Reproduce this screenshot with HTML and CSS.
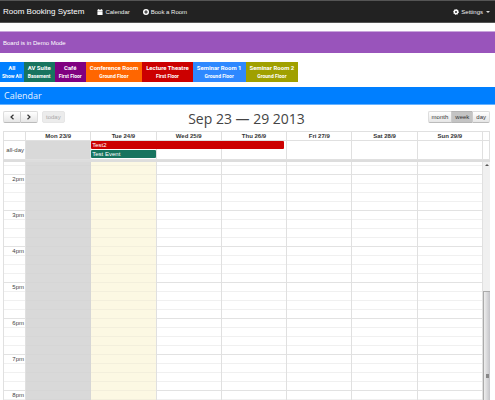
FILE: index.html
```html
<!DOCTYPE html>
<html lang="en">

<head>
    <meta charset="UTF-8">
    <meta name="viewport" content="width=device-width, initial-scale=1.0">
    <title>Room Booking System</title>
    <link rel="stylesheet" href="styles.css">
</head>

<body>
    <!-- navbar -->
    <nav class="navbar">
        <a class="brand" href="#">Room Booking System</a>
        <a class="nav-link nav-calendar" href="#">
            <svg class="icon" viewBox="0 0 14 14"><path fill="currentColor" d="M1 2h2V0h2v2h4V0h2v2h2v3H1zM1 6h12v8H1z"/></svg>
            Calendar
        </a>
        <a class="nav-link nav-book" href="#">
            <svg class="icon" viewBox="0 0 14 14"><circle cx="7" cy="7" r="7" fill="currentColor"/><path stroke="#222" stroke-width="2.4" d="M7 3v8M3 7h8"/></svg>
            Book a Room
        </a>
        <a class="nav-link nav-settings" href="#">
            <svg class="icon" viewBox="0 0 14 14"><circle cx="7" cy="7" r="5.6" fill="currentColor"/><circle cx="7" cy="7" r="6" fill="none" stroke="currentColor" stroke-width="2" stroke-dasharray="2.6 2.1"/><circle cx="7" cy="7" r="2.2" fill="#222"/></svg>
            Settings
            <span class="caret"></span>
        </a>
    </nav>

    <div class="alert">Board is in Demo Mode</div>

    <!-- room filter -->
    <div class="rooms">
        <button class="room room-all" type="button">All<small>Show All</small></button>
        <button class="room room-av" type="button">AV Suite<small>Basement</small></button>
        <button class="room room-cafe" type="button">Café<small>First Floor</small></button>
        <button class="room room-conference" type="button">Conference Room<small>Ground Floor</small></button>
        <button class="room room-lecture" type="button">Lecture Theatre<small>First Floor</small></button>
        <button class="room room-seminar1" type="button">Seminar Room 1<small>Ground Floor</small></button>
        <button class="room room-seminar2" type="button">Seminar Room 2<small>Ground Floor</small></button>
    </div>

    <h1 class="page-title">Calendar</h1>

    <main class="calendar">
        <header class="toolbar">
            <div class="toolbar-left">
                <div class="btn-group">
                    <button class="btn btn-arrow" type="button" aria-label="Previous"><svg class="chevron" viewBox="0 0 6 6"><path d="M4.5 .7 2 3l2.500 2.300"/></svg></button>
                    <button class="btn btn-arrow" type="button" aria-label="Next"><svg class="chevron" viewBox="0 0 6 6"><path d="M1.500 .7 4 3 1.500 5.300"/></svg></button>
                </div>
                <button class="btn btn-today" type="button" disabled>today</button>
            </div>
            <h2 class="range">Sep 23 — 29 2013</h2>
            <div class="btn-group toolbar-right">
                <button class="btn" type="button">month</button>
                <button class="btn active" type="button">week</button>
                <button class="btn" type="button">day</button>
            </div>
        </header>

        <table class="week">
            <thead>
                <tr>
                    <th class="axis"></th>
                    <th>Mon 23/9</th>
                    <th>Tue 24/9</th>
                    <th>Wed 25/9</th>
                    <th>Thu 26/9</th>
                    <th>Fri 27/9</th>
                    <th>Sat 28/9</th>
                    <th>Sun 29/9</th>
                    <th class="gutter"></th>
                </tr>
            </thead>
            <tbody>
                <tr class="all-day">
                    <td class="axis">all-day</td>
                    <td class="past"></td>
                    <td>
                        <a class="event event-lecture" href="#">Test2</a>
                        <a class="event event-av" href="#">Test Event</a>
                    </td>
                    <td></td>
                    <td></td>
                    <td></td>
                    <td></td>
                    <td></td>
                    <td class="gutter"></td>
                </tr>
            </tbody>
        </table>

        <div class="agenda">
            <table class="week slots">
                <tbody id="slots"></tbody>
            </table>
            <div class="scrollbar">
                <span class="scroll-up"></span>
                <span class="scroll-thumb"></span>
            </div>
        </div>
    </main>

    <script>
        // four quarter-hour rows for each hour, from half past one
        var slots = document.getElementById("slots");
        for (var i = 6; i < 34; i++) {
            var row = slots.insertRow();
            var onHour = i % 4 === 0;
            row.className = onHour ? "hour" : "";
            for (var day = 0; day <= 7; day++) {
                var cell = row.insertCell();
                if (day === 0) {
                    cell.className = "axis";
                    cell.textContent = onHour ? i / 4 + "pm" : "";
                } else if (day === 1) {
                    cell.className = "past";
                } else if (day === 2) {
                    cell.className = "today";
                }
            }
        }
    </script>
</body>

</html>
```
FILE: styles.css
```css
* {
    box-sizing: border-box;
    margin: 0;
    padding: 0;
}

body {
    display: flex;
    flex-direction: column;
    height: 100vh;
    overflow: hidden;
    background: #fff;
    color: #444;
    font-family: "Liberation Sans", Arial, sans-serif;
    font-size: 6px;
    line-height: 8px;
}

a {
    color: inherit;
    text-decoration: none;
}

button {
    border: 0;
    font: inherit;
    cursor: pointer;
}

/* navbar */
.navbar {
    display: flex;
    align-items: center;
    flex: none;
    height: 23px;
    padding: 0 5px 0 3px;
    background: #222;
    border-top: 1px solid #555;
    border-bottom: 1px solid #555;
    color: #fff;
}

.brand {
    font-size: 8px;
}

.nav-link {
    display: flex;
    align-items: center;
    gap: 2px;
    margin-left: 13px;
    color: #eee;
}

.nav-settings {
    margin-left: auto;
}

.icon {
    width: 6px;
    height: 6px;
    color: #fff;
}

.caret {
    margin-left: 1px;
    border-top: 2px solid #ddd;
    border-left: 2px solid transparent;
    border-right: 2px solid transparent;
}

.alert {
    flex: none;
    margin-top: 8px;
    padding: 7px 3px 6px;
    background: #9954bb;
    border-top: 1px solid #c9a5dc;
    color: #fff;
}

/* room filter */
.rooms {
    display: flex;
    flex: none;
    margin-top: 9px;
}

.room {
    padding: 2px 4px;
    color: #fff;
    font-family: Roboto, sans-serif;
    font-weight: bold;
    text-align: center;
}

.room small {
    display: block;
    font-size: 5px;
}

.room-all {
    padding: 2px;
    background: #007fff;
}

.room-av,
.event-av {
    background: #17745f;
}

.room-cafe {
    background: #800080;
}

.room-conference {
    background: #ff6600;
}

.room-lecture,
.event-lecture {
    background: #cc0000;
}

.room-seminar1 {
    background: #2e88ff;
}

.room-seminar2 {
    background: #a0a000;
}

.page-title {
    flex: none;
    margin-top: 5px;
    padding: 3px 4px;
    background: #007fff;
    border-bottom: 1px solid #66b2ff;
    color: #e6f2ff;
    font-family: "Open Sans", sans-serif;
    font-size: 9px;
    font-weight: normal;
    line-height: 11px;
}

/* calendar */
.calendar {
    display: flex;
    flex-direction: column;
    flex: 1;
    min-height: 0;
    padding: 0 5px 0 3px;
}

.toolbar {
    display: grid;
    grid-template-columns: 1fr auto 1fr;
    align-items: start;
    flex: none;
    height: 26px;
    padding-top: 6px;
}

.toolbar-left {
    display: flex;
    gap: 4px;
}

.toolbar-right {
    justify-self: end;
}

.range {
    color: #444;
    font-family: "Open Sans", sans-serif;
    font-size: 14px;
    font-weight: normal;
    line-height: 16px;
}

.btn-group {
    display: flex;
    border-radius: 2px;
}

.btn {
    height: 12px;
    padding: 0 3px;
    background: linear-gradient(#fff, #e6e6e6);
    border: 1px solid #ddd;
    border-bottom-color: #bbb;
    border-radius: 2px;
    color: #333;
    line-height: 10px;
}

.btn-group .btn:not(:first-child) {
    border-left-color: #ccc;
    border-top-left-radius: 0;
    border-bottom-left-radius: 0;
}

.btn-group .btn:not(:last-child) {
    border-right: 0;
    border-top-right-radius: 0;
    border-bottom-right-radius: 0;
}

.btn-group .btn-arrow {
    display: flex;
    align-items: center;
    padding: 0 5px;
}

.chevron {
    width: 6px;
    height: 6px;
    fill: none;
    stroke: #333;
    stroke-width: 1.2;
}

.btn.active {
    background: #c4c4c4;
    border-color: #b5b5b5;
}

.btn-today {
    background: #ececec;
    border-color: #e6e6e6;
    color: #aaa;
}

.week {
    flex: none;
    width: 100%;
    border-collapse: collapse;
    table-layout: fixed;
}

.week th,
.week td {
    border: 1px solid #e0e0e0;
    vertical-align: top;
}

.week th {
    height: 9px;
    color: #333;
}

.week .axis {
    width: 22px;
    padding-right: 1px;
    text-align: right;
    white-space: nowrap;
}

.week .gutter {
    width: 7px;
}

.week .past {
    background: #d9d9d9;
}

.week .today {
    background: #fcf8e3;
}

.all-day td {
    height: 19px;
}

.all-day .axis {
    vertical-align: middle;
}

.event {
    display: block;
    position: relative;
    height: 8px;
    margin-bottom: 1px;
    padding-left: 1px;
    border-radius: 1px;
    color: #fff;
}

/* runs on over the next two days */
.event-lecture {
    width: 300%;
}

.agenda {
    display: flex;
    flex: 1;
    align-items: flex-start;
    min-height: 0;
    overflow: hidden;
    border-top: 2px solid #ddd;
}

.slots {
    flex: 1;
}

.slots td {
    height: 9px;
    border-top-color: #f0f0f0;
    border-bottom: 0;
    line-height: 8px;
}

.slots .hour td {
    border-top-color: #e2e2e2;
}

.slots tr:first-child td {
    height: 3px;
    border-top: 0;
}

.slots tr .past {
    border-color: #d6d6d6;
}

.slots tr .today {
    border-top-color: #f3efdc;
}

.scrollbar {
    display: flex;
    flex-direction: column;
    align-items: center;
    justify-content: space-between;
    flex: none;
    width: 7px;
    height: 299px;
    background: #f0f0f0;
}

.scroll-up {
    margin-top: 2px;
    border-bottom: 2px solid #555;
    border-left: 2px solid transparent;
    border-right: 2px solid transparent;
}

.scroll-thumb {
    display: flex;
    align-items: center;
    justify-content: center;
    width: 7px;
    height: 170px;
    background: linear-gradient(90deg, #eee, #c4c4c8);
    border: 1px solid #aaa;
    border-right: 0;
}

.scroll-thumb::after {
    content: "";
    width: 3px;
    height: 4px;
    background: #888;
}
```
